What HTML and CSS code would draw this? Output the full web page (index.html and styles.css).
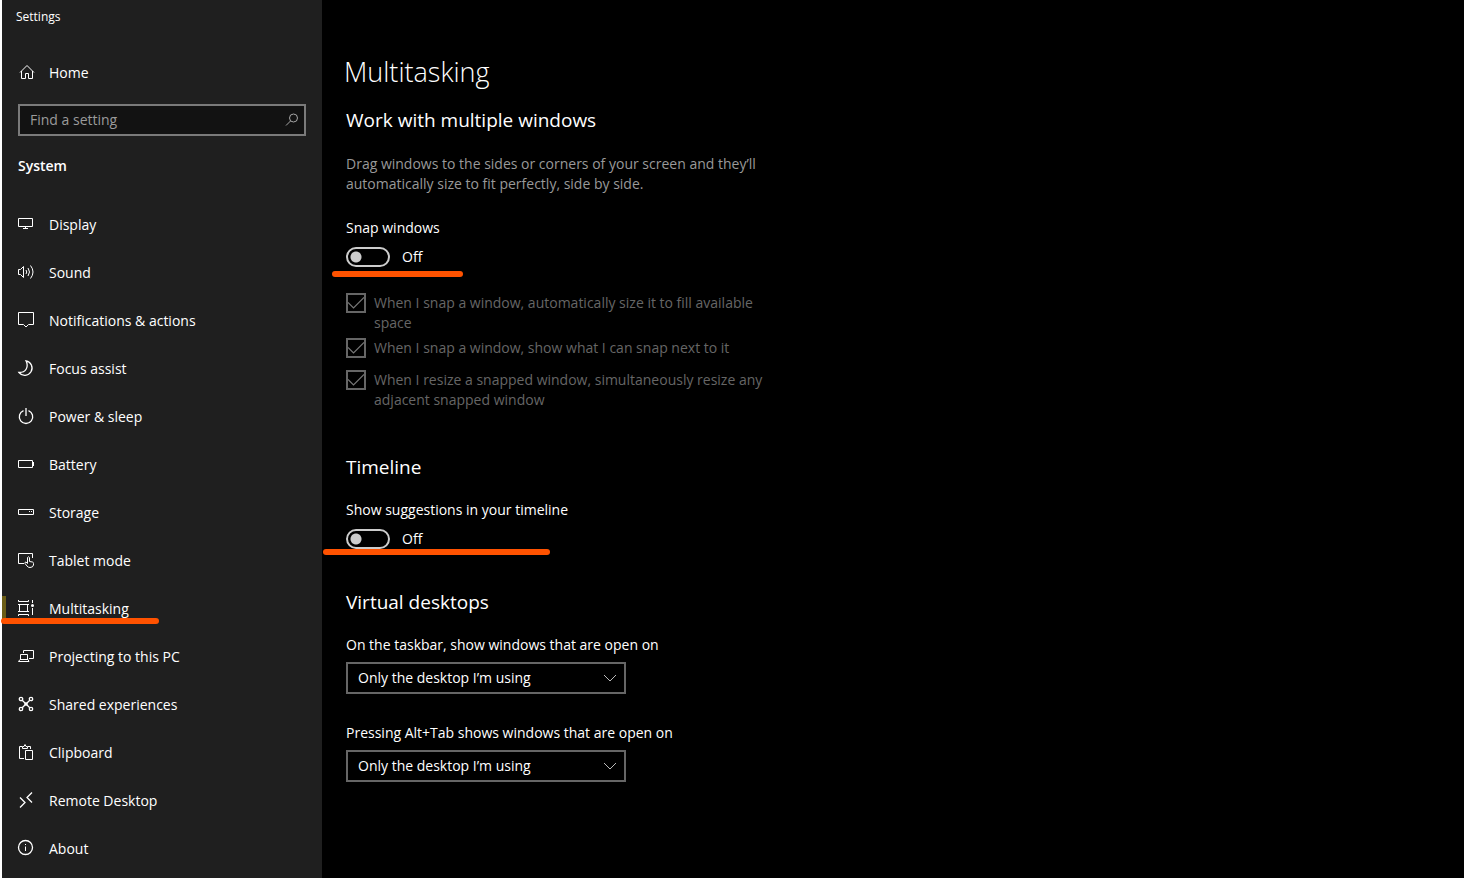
FILE: index.html
```html
<!DOCTYPE html>
<html lang="en">
<head>
<meta charset="utf-8">
<title>Settings</title>
<link rel="stylesheet" href="styles.css">
</head>
<body>
<div class="window">
  <aside class="sidebar">
    <div class="app-title">Settings</div>
    <a class="nav-link" href="#home">
      <svg class="icon" viewBox="0 0 16 16"><path d="M2 8.500 9 1.500l7 7M3.500 7v7.500h4v-5h3v5h4V7"/></svg>
      Home
    </a>
    <div class="search">
      <input class="search-input" type="text" placeholder="Find a setting" aria-label="Find a setting">
      <svg class="search-icon" viewBox="0 0 14 14"><circle cx="8.500" cy="5" r="4"/><path d="M5.500 8 1 12.500"/></svg>
    </div>
    <h2 class="section-name">System</h2>
    <nav class="nav">
      <a class="nav-link" href="#display"><svg class="icon" viewBox="0 0 16 16"><path d="M.5 2.500h14v8H.5zM7.500 10.500v2M5 12.500h5"/></svg>Display</a>
      <a class="nav-link" href="#sound"><svg class="icon" viewBox="0 0 16 16"><path d="M.5 5.500h2L5.500 2.500v11L2.500 10.500h-2zM8 6q1.500 2 0 4M10 4q3 4 0 8M12.500 1.500q5 6.500 0 13"/></svg>Sound</a>
      <a class="nav-link" href="#notifications"><svg class="icon" viewBox="0 0 16 16"><path d="M.5.5h15v12h-5L8 15l-2.500-2.500h-5z"/></svg>Notifications &amp; actions</a>
      <a class="nav-link" href="#focus"><svg class="icon" viewBox="0 0 16 16"><path class="bold" d="M8 .8A7.300 7.300 0 1 1 1 12.500C8 12.500 11 7 8 .8z"/></svg>Focus assist</a>
      <a class="nav-link" href="#power"><svg class="icon" viewBox="0 0 16 16"><path class="bold" d="M5.500 2.600a6.700 6.700 0 1 0 5 0M8 0v8"/></svg>Power &amp; sleep</a>
      <a class="nav-link" href="#battery"><svg class="icon" viewBox="0 0 16 16"><path d="M.5 4.500h14v7H.5zM15.500 6v4"/></svg>Battery</a>
      <a class="nav-link" href="#storage"><svg class="icon" viewBox="0 0 16 16"><path d="M.5 5.500h15v5H.5zM11 7.500h1M13 7.500h1"/></svg>Storage</a>
      <a class="nav-link" href="#tablet"><svg class="icon" viewBox="0 0 16 16"><path d="M6 11.500H.5v-10h14V6M9.500 11.500V5.500q1-1.500 2 0v4l3 .5q1 .3 1 1.500v1.500q-.5 2.500-3.500 2.500-2 0-3-1.500L7 11.500q-.5-1.500 1-1.500l1.500 1.500"/></svg>Tablet mode</a>
      <a class="nav-link active" href="#multitasking" aria-current="page"><svg class="icon" viewBox="0 0 16 16"><path d="M.5 0v1.500h10V0M1.500 4.500h8v7h-8zM0 4.500h11M0 11.500h11M.5 16v-1.500h10V16M14.500 0v3M14.500 8v7"/><circle class="solid" cx="14.500" cy="5.500" r="1.500"/></svg>Multitasking<span class="marker marker-nav"></span></a>
      <a class="nav-link" href="#projecting"><svg class="icon" viewBox="0 0 16 16"><path d="M5.500 5V2.500h10v8H11M2.500 11V6.500h7V11M.5 13.500 2 11.500h8l1 2z"/></svg>Projecting to this PC</a>
      <a class="nav-link" href="#shared"><svg class="icon" viewBox="0 0 16 16"><g class="bold"><circle cx="3" cy="3" r="1.700"/><circle cx="13" cy="3" r="1.700"/><circle cx="3" cy="13" r="1.700"/><circle cx="13" cy="13" r="1.700"/><path d="m4.200 4.200 7.600 7.600M11.800 4.200 4.200 11.800"/></g><circle class="solid" cx="8" cy="8" r="1.800"/></svg>Shared experiences</a>
      <a class="nav-link" href="#clipboard"><svg class="icon" viewBox="0 0 16 16"><path d="M6 14.500H1.500v-12H4M10 2.500h2.500V5M4.500 4.500v-2h1.500l1-2 1 2h1.500v2zM7.500 6.500h7v9h-7z"/></svg>Clipboard</a>
      <a class="nav-link" href="#remote"><svg class="icon" viewBox="0 0 16 16"><path class="bold" d="m2 5.500 5 5-5 5M14 .5l-5 5 5 5"/></svg>Remote Desktop</a>
      <a class="nav-link" href="#about"><svg class="icon" viewBox="0 0 16 16"><circle class="bold" cx="7.500" cy="7.500" r="7"/><path d="M7.500 6.500V11M7.500 4v1"/></svg>About</a>
    </nav>
  </aside>

  <main class="content">
    <h1 class="page-title">Multitasking</h1>

    <section class="group">
      <h2 class="group-title">Work with multiple windows</h2>
      <p class="description">Drag windows to the sides or corners of your screen and they’ll automatically size to fit perfectly, side by side.</p>
      <label class="field-label snap-label" for="snap">Snap windows</label>
      <div class="toggle-row">
        <input class="toggle" type="checkbox" role="switch" id="snap">
        <span>Off</span>
        <span class="marker marker-snap"></span>
      </div>
      <div class="checks">
        <label class="check"><input class="box" type="checkbox" checked disabled><span>When I snap a window, automatically size it to fill available space</span></label>
        <label class="check"><input class="box" type="checkbox" checked disabled><span>When I snap a window, show what I can snap next to it</span></label>
        <label class="check"><input class="box" type="checkbox" checked disabled><span>When I resize a snapped window, simultaneously resize any adjacent snapped window</span></label>
      </div>
    </section>

    <section class="group">
      <h2 class="group-title">Timeline</h2>
      <label class="field-label" for="suggestions">Show suggestions in your timeline</label>
      <div class="toggle-row">
        <input class="toggle" type="checkbox" role="switch" id="suggestions">
        <span>Off</span>
        <span class="marker marker-timeline"></span>
      </div>
    </section>

    <section class="group">
      <h2 class="group-title">Virtual desktops</h2>
      <label class="field-label" for="taskbar">On the taskbar, show windows that are open on</label>
      <div class="select-wrap">
        <select class="select" id="taskbar"><option>Only the desktop I’m using</option><option>All desktops</option></select>
        <svg class="chevron" viewBox="0 0 14 8"><path d="m1 1 6 6 6-6"/></svg>
      </div>
      <label class="field-label second-label" for="alttab">Pressing Alt+Tab shows windows that are open on</label>
      <div class="select-wrap">
        <select class="select" id="alttab"><option>Only the desktop I’m using</option><option>All desktops</option></select>
        <svg class="chevron" viewBox="0 0 14 8"><path d="m1 1 6 6 6-6"/></svg>
      </div>
    </section>
  </main>
</div>
</body>
</html>
```
FILE: styles.css
```css
* {
  box-sizing: border-box;
}

body {
  margin: 0;
  background: #000;
  color: #fff;
  font: 14px/20px "Open Sans", "Noto Sans", sans-serif;
}

h1, h2, p {
  margin: 0;
}

svg {
  fill: none;
  stroke: currentColor;
}

.window {
  display: grid;
  grid-template-columns: 320px 1fr;
  min-height: 100vh;
  border-left: 2px solid #fff;
}

/* Sidebar */
.sidebar {
  background: #1f1f1f;
}

.app-title {
  padding: 7px 14px 21px;
  font-size: 12px;
}

.nav-link {
  position: relative;
  display: flex;
  align-items: center;
  gap: 15px;
  height: 48px;
  padding: 2px 16px 0;
  color: #fff;
  text-decoration: none;
}

.icon {
  width: 16px;
  height: 16px;
  margin-bottom: 2px;
  overflow: visible;
}

.bold {
  stroke-width: 1.3;
}

.solid {
  fill: currentColor;
  stroke: none;
}

.search {
  position: relative;
  margin: 8px 16px 0;
}

.search-input {
  display: block;
  width: 100%;
  height: 32px;
  padding: 0 36px 2px 10px;
  border: 2px solid #7a7a7a;
  border-radius: 0;
  background: #121212;
  color: #fff;
  font: inherit;
}

.search-input::placeholder {
  color: #9b9b9b;
  opacity: 1;
}

.search-icon {
  position: absolute;
  top: 9px;
  right: 7px;
  width: 14px;
  height: 14px;
  color: #a6a6a6;
}

.section-name {
  padding: 20px 16px 24px;
  font-size: 14px;
  font-weight: 600;
}

.active::before {
  content: "";
  position: absolute;
  top: 12px;
  left: 0;
  width: 4px;
  height: 24px;
  background: #6b5d16;
}

/* Orange highlight strokes */
.marker {
  position: absolute;
  height: 6px;
  border-radius: 3px;
  background: #ff5200;
}

.marker-nav {
  top: 34px;
  left: -1px;
  width: 158px;
}

.marker-snap {
  top: 24px;
  left: -14px;
  width: 131px;
}

.marker-timeline {
  top: 20px;
  left: -23px;
  width: 227px;
}

/* Content */
.content {
  padding: 48px 24px;
}

.page-title {
  margin-left: -2px;
  font-size: 27px;
  font-weight: 300;
  line-height: 48px;
}

.group + .group {
  margin-top: 39px;
}

.group-title {
  margin-top: 10px;
  font-size: 19px;
  font-weight: 400;
  line-height: 28px;
}

.description {
  max-width: 430px;
  margin-top: 20px;
  color: #999;
}

.field-label {
  display: block;
  margin-top: 19px;
}

.snap-label {
  margin-top: 24px;
}

.second-label {
  margin-top: 29px;
}

.toggle-row {
  position: relative;
  display: flex;
  align-items: center;
  gap: 12px;
  margin-top: 9px;
}

.toggle {
  appearance: none;
  width: 44px;
  height: 20px;
  margin: 0;
  border: 2px solid #ccc;
  border-radius: 10px;
  background: radial-gradient(circle at 8px 8px, #ccc 5px, transparent 6px);
}

.checks {
  max-width: 430px;
  margin-top: 26px;
  color: #666;
}

.check {
  display: flex;
  align-items: flex-start;
  gap: 8px;
  min-height: 32px;
  padding-bottom: 5px;
}

.check:last-child {
  padding-bottom: 4px;
}

.box {
  appearance: none;
  flex: none;
  width: 20px;
  height: 20px;
  margin: 0;
  border: 2px solid #666;
}

.box:checked {
  background: url("data:image/svg+xml,%3Csvg xmlns='http://www.w3.org/2000/svg' viewBox='0 0 16 16'%3E%3Cpath d='M0 7.500l5.500 5.500L16 2.500' fill='none' stroke='%23777' stroke-width='1.2'/%3E%3C/svg%3E") center / 16px 16px no-repeat;
}

.select-wrap {
  position: relative;
  width: 280px;
  margin-top: 7px;
}

.select {
  appearance: none;
  display: block;
  width: 100%;
  height: 32px;
  padding: 0 32px 0 10px;
  border: 2px solid #666;
  border-radius: 0;
  background: #000;
  color: #fff;
  font: inherit;
}

.chevron {
  position: absolute;
  top: 12px;
  right: 9px;
  width: 14px;
  height: 8px;
  color: #bbb;
  pointer-events: none;
}
```
